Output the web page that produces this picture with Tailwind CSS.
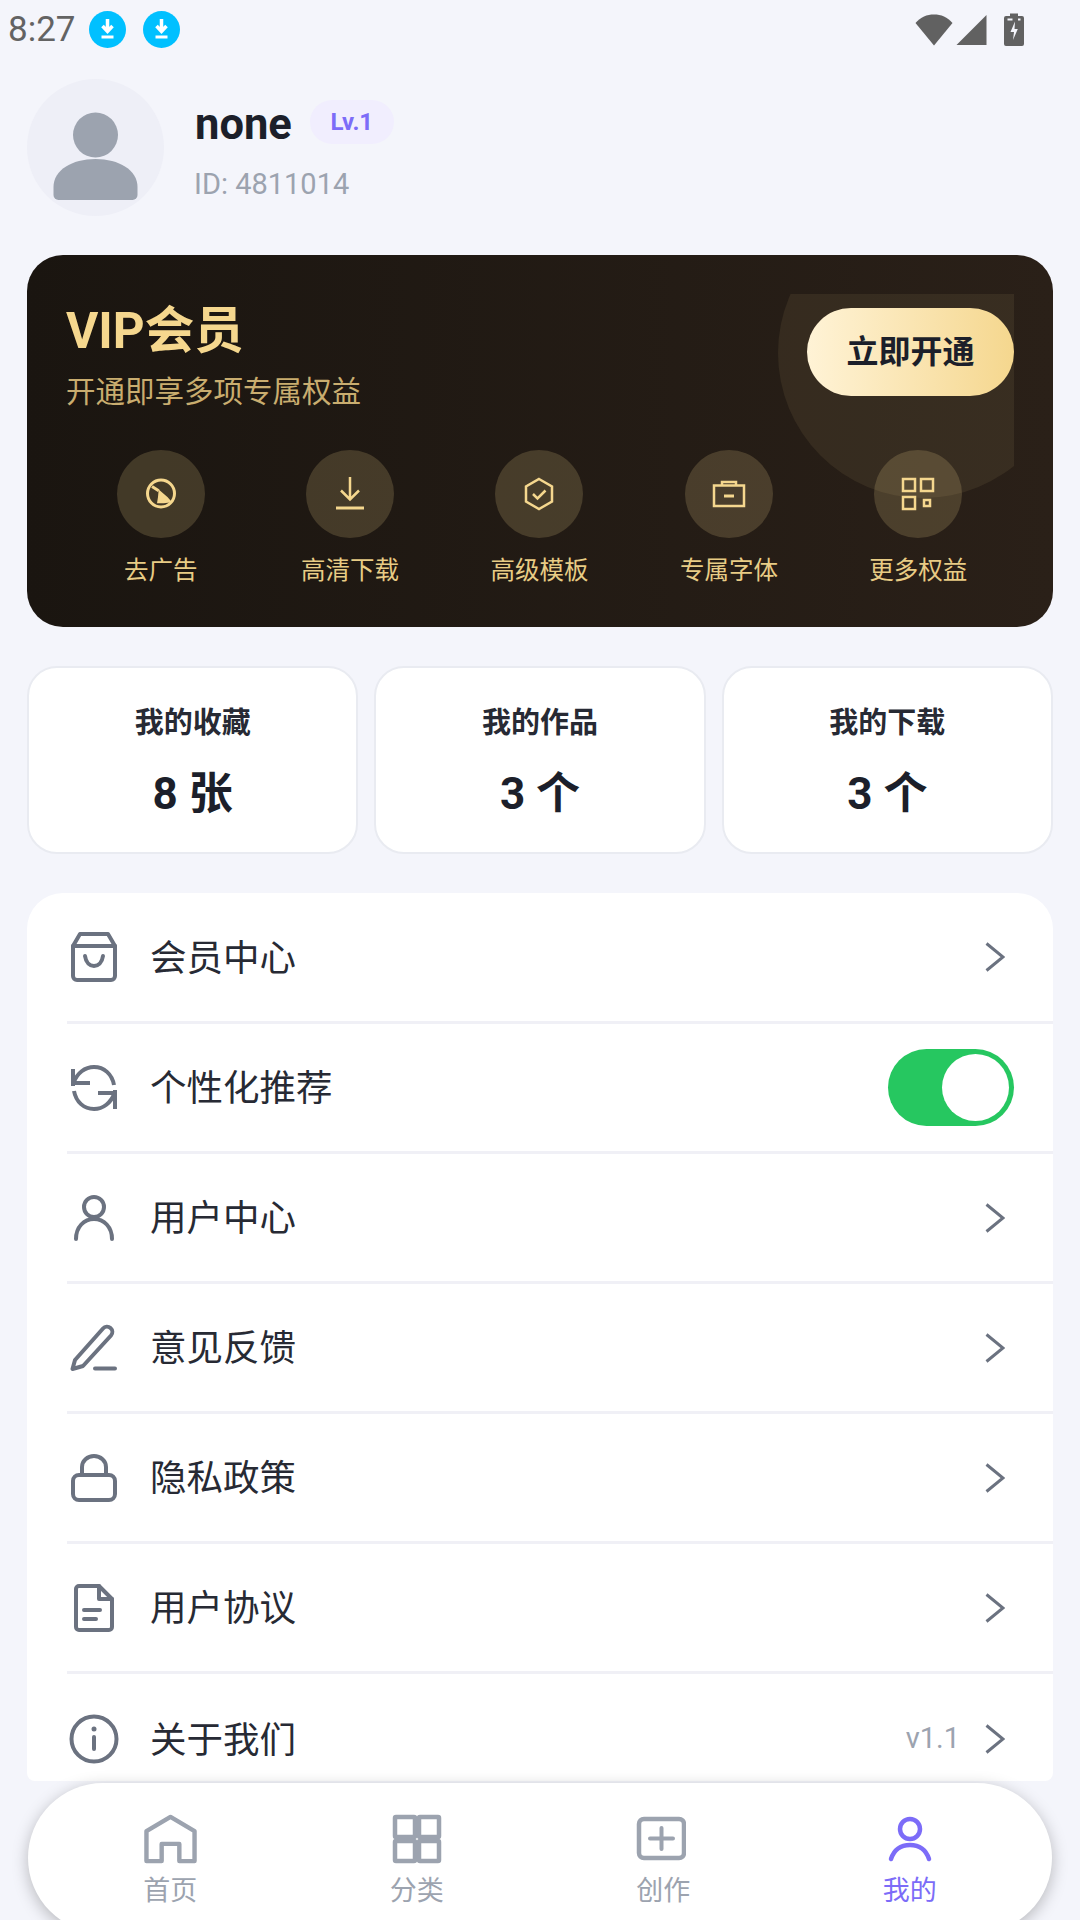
<!DOCTYPE html>
<html lang="zh-CN">
<head>
<meta charset="utf-8">
<script src="https://cdn.jsdelivr.net/npm/@tailwindcss/browser@4"></script>
</head>
<body>
<div class="relative w-[1080px] h-[1920px] overflow-hidden bg-[#f4f5fb] font-['Roboto','Noto_Sans_CJK_SC',sans-serif] text-[#1c1f2a]">

  <!-- status bar -->
  <div class="h-[59px] flex items-center pl-[8px] pr-[56px]">
    <span class="w-[66px] text-[35px] leading-none text-[#636363]">8:27</span>
    <svg class="ml-[15px] w-[37px] h-[37px]" viewBox="0 0 37 37"><circle cx="18.5" cy="18.5" r="18.5" fill="#00c0ff"/><path d="M18.5 8v11M13.5 15l5 5.5 5-5.500" stroke="#fff" stroke-width="3.500" fill="none"/><path d="M12.500 26h12" stroke="#fff" stroke-width="3"/></svg>
    <svg class="ml-[17px] w-[37px] h-[37px]" viewBox="0 0 37 37"><circle cx="18.5" cy="18.5" r="18.5" fill="#00c0ff"/><path d="M18.5 8v11M13.5 15l5 5.5 5-5.500" stroke="#fff" stroke-width="3.500" fill="none"/><path d="M12.500 26h12" stroke="#fff" stroke-width="3"/></svg>
    <div class="ml-auto flex items-center">
      <svg class="w-[38px] h-[33px]" viewBox="0 0 38 33"><path d="M0.500 10C5.500 4 12 1.500 19 1.500S32.500 4 37.500 10L19 32.500Z" fill="#616161"/></svg>
      <svg class="ml-[3px] w-[31px] h-[33px]" viewBox="0 0 31 33"><path d="M30.500 2V32H0.500Z" fill="#616161"/></svg>
      <svg class="ml-[17px] w-[20px] h-[33px]" viewBox="0 0 20 33"><path d="M6 0.500h8V3h4a2 2 0 0 1 2 2v26a2 2 0 0 1-2 2H2a2 2 0 0 1-2-2V5a2 2 0 0 1 2-2h4Z" fill="#616161"/><path d="M3.500 6.500h5M14 6.500h2.500" stroke="#f4f5fb" stroke-width="2"/><path d="M11 8.500 6.500 19H10l-1 8 4.800-11H10.500Z" fill="#f4f5fb"/></svg>
    </div>
  </div>

  <div class="px-[27px]">
    <!-- profile -->
    <div class="mt-[20px] flex items-start">
      <div class="w-[137px] h-[137px] rounded-full bg-[#eeeff7]">
        <svg class="w-[137px] h-[137px]" viewBox="0 0 137 137"><circle cx="68.500" cy="56" r="22.500" fill="#9ca3af"/><path d="M26.500 116V108C26.500 91 45 80 68.500 80S110.500 91 110.500 108V116a5 5 0 0 1-5 5H31.500a5 5 0 0 1-5-5Z" fill="#9ca3af"/></svg>
      </div>
      <div class="ml-[31px] mt-[17px]">
        <div class="h-[52px] flex items-center">
          <span class="mt-[5px] text-[43.500px] leading-[52px] font-bold text-[#1c1f2a]">none</span>
          <span class="ml-[18px] w-[84px] h-[44px] rounded-full bg-[#f1eefe] text-[#7c6cf8] text-[24px] font-bold flex items-center justify-center">Lv.1</span>
        </div>
        <div class="mt-[19px] ml-[-1px] text-[29px] leading-[34px] text-[#9ca3af]">ID: 4811014</div>
      </div>
    </div>

    <!-- VIP -->
    <div class="mt-[39px] h-[372px] rounded-[36px] bg-linear-to-r from-[#1a1510] to-[#2a2018] p-[39px] pb-0">
      <div class="relative h-full overflow-hidden">
        <div class="absolute top-[-86px] right-[-54px] w-[290px] h-[290px] rounded-full bg-[#f5d78e]/8"></div>
        <div class="relative h-[116px] flex items-center justify-between">
          <div class="self-start">
            <div class="text-[49.500px] leading-[74px] font-bold text-[#f5d78e]">VIP会员</div>
            <div class="mt-[3px] text-[29.5px] leading-[42px] text-[#c9ad6f]">开通即享多项专属权益</div>
          </div>
          <div class="w-[207px] h-[88px] rounded-full bg-linear-to-r from-[#fff3d6] to-[#f5d78e] flex items-center justify-center text-[32px] font-bold text-[#1c1f2a]">立即开通</div>
        </div>
        <div class="relative mt-[40px] w-[947px] grid grid-cols-5">
          <div class="flex flex-col items-center">
            <div class="w-[88px] h-[88px] rounded-full bg-[#f5d78e]/18 flex items-center justify-center">
              <svg class="w-[40px] h-[40px]" viewBox="0 0 40 40" fill="none" stroke="#f5d78e" stroke-width="3"><circle cx="20" cy="19.500" r="13.500"/><path d="M11 12.500 17.700 16.700"/><path d="M17.700 15.500 26.700 23.300 31 28.300 22.700 29.300H16L17 23Z" fill="#f5d78e" stroke="none"/></svg>
            </div>
            <div class="mt-[15px] text-[24.500px] leading-[36px] text-[#e8cc85]">去广告</div>
          </div>
          <div class="flex flex-col items-center">
            <div class="w-[88px] h-[88px] rounded-full bg-[#f5d78e]/18 flex items-center justify-center">
              <svg class="w-[40px] h-[40px]" viewBox="0 0 40 40" fill="none" stroke="#f5d78e" stroke-width="2.500"><path d="M20 3v22M11 16.500l9 9 9-9"/><path d="M6 34h28" stroke-width="3"/></svg>
            </div>
            <div class="mt-[15px] text-[24.500px] leading-[36px] text-[#e8cc85]">高清下载</div>
          </div>
          <div class="flex flex-col items-center">
            <div class="w-[88px] h-[88px] rounded-full bg-[#f5d78e]/18 flex items-center justify-center">
              <svg class="w-[40px] h-[40px]" viewBox="0 0 40 40" fill="none" stroke="#f5d78e" stroke-width="2.500"><path d="M20 5 33 12.500V27.500L20 35 7 27.500V12.500Z"/><path d="M14 20l4.500 4.500L26.500 16.500"/></svg>
            </div>
            <div class="mt-[15px] text-[24.500px] leading-[36px] text-[#e8cc85]">高级模板</div>
          </div>
          <div class="flex flex-col items-center">
            <div class="w-[88px] h-[88px] rounded-full bg-[#f5d78e]/18 flex items-center justify-center">
              <svg class="w-[40px] h-[40px]" viewBox="0 0 40 40" fill="none" stroke="#f5d78e" stroke-width="2.500"><path d="M5 11.500H35V32H5ZM13 11.500V8H27V11.500"/><path d="M15 22H25" stroke-width="3"/></svg>
            </div>
            <div class="mt-[15px] text-[24.500px] leading-[36px] text-[#e8cc85]">专属字体</div>
          </div>
          <div class="flex flex-col items-center">
            <div class="w-[88px] h-[88px] rounded-full bg-[#f5d78e]/18 flex items-center justify-center">
              <svg class="w-[40px] h-[40px]" viewBox="0 0 40 40" fill="none" stroke="#f5d78e" stroke-width="2.500"><rect x="5" y="5" width="12" height="12"/><rect x="23" y="5" width="12" height="12"/><rect x="5" y="23" width="12" height="12"/><rect x="26" y="26" width="6" height="6"/></svg>
            </div>
            <div class="mt-[15px] text-[24.500px] leading-[36px] text-[#e8cc85]">更多权益</div>
          </div>
        </div>
      </div>
    </div>

    <!-- stats -->
    <div class="mt-[39px] grid grid-cols-3 gap-[16px]">
      <div class="h-[188px] rounded-[30px] bg-white border-2 border-[#e9ebf1] flex flex-col items-center pt-[35px]">
        <div class="text-[29px] leading-[40px] font-bold text-[#272a34]">我的收藏</div>
        <div class="mt-[21px] text-[44px] leading-[60px] font-bold">8 张</div>
      </div>
      <div class="h-[188px] rounded-[30px] bg-white border-2 border-[#e9ebf1] flex flex-col items-center pt-[35px]">
        <div class="text-[29px] leading-[40px] font-bold text-[#272a34]">我的作品</div>
        <div class="mt-[21px] text-[44px] leading-[60px] font-bold">3 个</div>
      </div>
      <div class="h-[188px] rounded-[30px] bg-white border-2 border-[#e9ebf1] flex flex-col items-center pt-[35px]">
        <div class="text-[29px] leading-[40px] font-bold text-[#272a34]">我的下载</div>
        <div class="mt-[21px] text-[44px] leading-[60px] font-bold">3 个</div>
      </div>
    </div>

    <!-- menu -->
    <div class="mt-[39px] h-[888px] bg-white rounded-t-[36px] rounded-b-[8px] overflow-hidden pl-[40px] text-[36.500px] text-[#272a34]">
      <div class="h-[131px] flex items-center border-b-[3px] border-[#f0f0f6] pr-[48px]">
        <svg class="ml-[4px] w-[46px] h-[50px] shrink-0" viewBox="0 0 46 50" fill="none" stroke="#6b7280" stroke-width="4" stroke-linejoin="round" stroke-linecap="round"><path d="M2 14V44a4 4 0 0 0 4 4H40a4 4 0 0 0 4-4V14L37 2H9Z"/><path d="M2 14H44"/><path d="M14 24c1 7 5 10 9 10s8-3 9-10"/></svg>
        <span class="ml-[33px] pt-[4px]">会员中心</span>
        <svg class="ml-auto w-[20px] h-[30px]" viewBox="0 0 20 30" fill="none" stroke="#6b7280" stroke-width="3"><path d="M1.500 1.500 18 15 1.500 28.500"/></svg>
      </div>
      <div class="h-[130px] flex items-center border-b-[3px] border-[#f0f0f6] pr-[39px]">
        <svg class="ml-[3px] w-[48px] h-[48px] shrink-0" viewBox="0 0 48 48" fill="none" stroke="#6b7280" stroke-width="4"><path d="M3 22V5M3 19H20M3.500 19C7 9 15 3 24 3c10 0 18 7 20 18"/><path d="M45 26V45M45 29H28M44.500 29C41 39 33 45 24 45 14 45 6 38 4 27"/></svg>
        <span class="ml-[32px] pt-[4px]">个性化推荐</span>
        <div class="ml-auto w-[126px] h-[77px] rounded-full bg-[#26c760] flex items-center justify-end pr-[5px]">
          <div class="w-[67px] h-[67px] rounded-full bg-white"></div>
        </div>
      </div>
      <div class="h-[130px] flex items-center border-b-[3px] border-[#f0f0f6] pr-[48px]">
        <svg class="ml-[3px] w-[48px] h-[48px] shrink-0" viewBox="0 0 48 48" fill="none" stroke="#6b7280" stroke-width="4" stroke-linecap="round"><circle cx="24" cy="13" r="10"/><path d="M6 45c0-12 8-20 18-20s18 8 18 20"/></svg>
        <span class="ml-[32px] pt-[4px]">用户中心</span>
        <svg class="ml-auto w-[20px] h-[30px]" viewBox="0 0 20 30" fill="none" stroke="#6b7280" stroke-width="3"><path d="M1.500 1.500 18 15 1.500 28.500"/></svg>
      </div>
      <div class="h-[130px] flex items-center border-b-[3px] border-[#f0f0f6] pr-[48px]">
        <svg class="ml-[3px] w-[48px] h-[48px] shrink-0" viewBox="0 0 48 48" fill="none" stroke="#6b7280" stroke-width="4" stroke-linecap="round" stroke-linejoin="round"><path d="M2.500 45 5 36 33 4.500a5 5 0 0 1 8 7L13 42Z"/><path d="M25 44.500H45"/></svg>
        <span class="ml-[32px] pt-[4px]">意见反馈</span>
        <svg class="ml-auto w-[20px] h-[30px]" viewBox="0 0 20 30" fill="none" stroke="#6b7280" stroke-width="3"><path d="M1.500 1.500 18 15 1.500 28.500"/></svg>
      </div>
      <div class="h-[130px] flex items-center border-b-[3px] border-[#f0f0f6] pr-[48px]">
        <svg class="ml-[3px] w-[48px] h-[48px] shrink-0" viewBox="0 0 48 48" fill="none" stroke="#6b7280" stroke-width="4"><rect x="3" y="21" width="42" height="25" rx="6"/><path d="M12 21V13a12 11 0 0 1 24 0V21"/></svg>
        <span class="ml-[32px] pt-[4px]">隐私政策</span>
        <svg class="ml-auto w-[20px] h-[30px]" viewBox="0 0 20 30" fill="none" stroke="#6b7280" stroke-width="3"><path d="M1.500 1.500 18 15 1.500 28.500"/></svg>
      </div>
      <div class="h-[130px] flex items-center border-b-[3px] border-[#f0f0f6] pr-[48px]">
        <svg class="ml-[3px] w-[48px] h-[48px] shrink-0" viewBox="0 0 48 48" fill="none" stroke="#6b7280" stroke-width="4" stroke-linejoin="round" stroke-linecap="round"><path d="M6 5a3 3 0 0 1 3-3H29L42 15V43a3 3 0 0 1-3 3H9a3 3 0 0 1-3-3Z"/><path d="M29 2V15H42"/><path d="M14 26H30M14 35H26"/></svg>
        <span class="ml-[32px] pt-[4px]">用户协议</span>
        <svg class="ml-auto w-[20px] h-[30px]" viewBox="0 0 20 30" fill="none" stroke="#6b7280" stroke-width="3"><path d="M1.500 1.500 18 15 1.500 28.500"/></svg>
      </div>
      <div class="h-[130px] flex items-center pr-[48px]">
        <svg class="ml-[2px] w-[50px] h-[50px] shrink-0" viewBox="0 0 50 50" fill="none" stroke="#6b7280" stroke-width="4"><circle cx="25" cy="25" r="22.500"/><path d="M25 23V35" stroke-linecap="round"/><circle cx="25" cy="15" r="2.500" fill="#6b7280" stroke="none"/></svg>
        <span class="ml-[31px] pt-[4px]">关于我们</span>
        <span class="ml-auto text-[29px] text-[#9ca3af]">v1.1</span>
        <svg class="ml-[25px] w-[20px] h-[30px]" viewBox="0 0 20 30" fill="none" stroke="#6b7280" stroke-width="3"><path d="M1.500 1.500 18 15 1.500 28.500"/></svg>
      </div>
    </div>
  </div>

  <!-- bottom nav -->
  <div class="absolute left-[28px] top-[1783px] w-[1024px] h-[150px] rounded-full bg-white shadow-[0_4px_16px_rgba(0,0,0,0.25)] px-[19px] grid grid-cols-4 text-[27px] text-[#9ca3af]">
    <div class="flex flex-col items-center pt-[31px]">
      <svg class="w-[53px] h-[50px]" viewBox="0 0 54 50" fill="none" stroke="#9ca3af" stroke-width="4.500" stroke-linejoin="round"><path d="M2.500 17 27 2.500 51.500 17V47.500H36V30H18V47.500H2.500Z"/></svg>
      <div class="mt-[11px] leading-[32px]">首页</div>
    </div>
    <div class="flex flex-col items-center pt-[31px]">
      <svg class="w-[50px] h-[50px]" viewBox="0 0 50 50" fill="none" stroke="#9ca3af" stroke-width="4.500" stroke-linejoin="round"><rect x="3" y="3" width="20" height="20" rx="1"/><rect x="27" y="3" width="20" height="20" rx="1"/><rect x="3" y="27" width="20" height="20" rx="1"/><rect x="27" y="27" width="20" height="20" rx="1"/></svg>
      <div class="mt-[11px] leading-[32px]">分类</div>
    </div>
    <div class="flex flex-col items-center pt-[31px]">
      <svg class="ml-[-4px] w-[50px] h-[50px]" viewBox="0 0 50 50" fill="none" stroke="#9ca3af" stroke-width="4.500"><rect x="3" y="5" width="45" height="39" rx="5"/><path d="M14 24.500H37M25.500 14V35" stroke-linecap="round" stroke-width="4"/></svg>
      <div class="mt-[11px] leading-[32px]">创作</div>
    </div>
    <div class="flex flex-col items-center pt-[31px] text-[#7c6cf8]">
      <svg class="w-[50px] h-[50px]" viewBox="0 0 50 50" fill="none" stroke="#7c6cf8" stroke-width="4.500" stroke-linecap="round"><circle cx="25" cy="15" r="10"/><path d="M6 45c3-9 10-14 19-14s16 5 19 14"/></svg>
      <div class="mt-[11px] leading-[32px]">我的</div>
    </div>
  </div>
</div>
</body>
</html>
